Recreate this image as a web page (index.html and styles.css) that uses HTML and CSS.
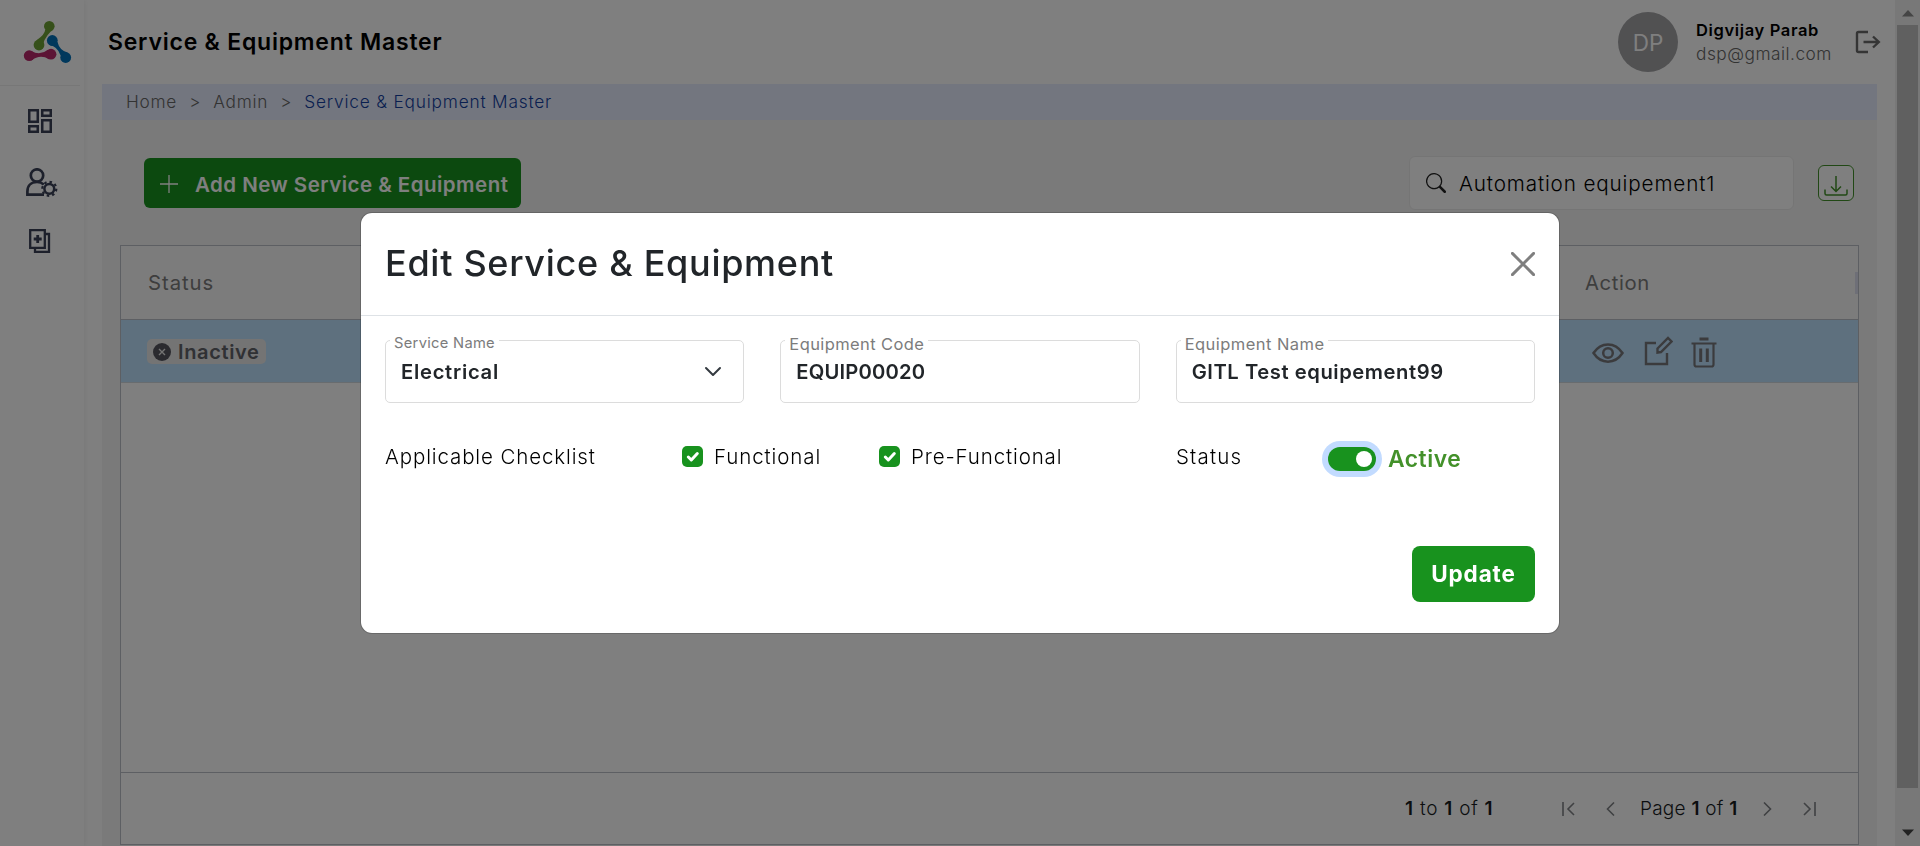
FILE: index.html
```html
<!DOCTYPE html>
<html lang="en">
<head>
<meta charset="utf-8">
<title>Service &amp; Equipment Master</title>
<link rel="stylesheet" href="styles.css">
</head>
<body>
<div class="app">
  <aside class="sidebar">
    <div class="logo">
      <svg width="50" height="46" viewBox="22 19 50 46">
        <g fill="#6da034"><circle cx="49.300" cy="26.200" r="5.300"/><circle cx="39" cy="45" r="5.400"/><path d="M45.200 29.500Q45 34.500 36.500 40.300L42.500 49Q42.500 39.500 51 31.200Z"/></g>
        <g fill="#0070b8"><circle cx="52.300" cy="40.500" r="5.400"/><circle cx="65.700" cy="57.500" r="5.400"/><path d="M49.500 45.100Q57.500 46.500 60.600 55.500L67.500 52.400Q59.500 50.500 57.500 42Z"/></g>
        <g fill="#b8286a"><circle cx="29.200" cy="55.700" r="5.400"/><circle cx="51" cy="54.200" r="5.400"/><path d="M31.500 50.900Q39.500 56.300 48 49.800L49 59.200Q40 53.800 31.500 60.500Z"/></g>
      </svg>
    </div>
    <nav class="side-nav">
      <svg class="nav-dash" width="24" height="24" viewBox="0 0 24 24" fill="none" stroke="#3a4157" stroke-width="2.500"><path d="M1.250 1.250h8.500v11.500h-8.500zM14.250 1.250h8.500v5.500h-8.500zM14.250 11.250h8.500v11.500h-8.500zM1.250 17.250h8.500v5.500h-8.500z"/></svg>
      <svg class="nav-user" width="32" height="30" viewBox="0 0 32 30" fill="none" stroke="#3a4157" stroke-width="2.700"><circle cx="11" cy="7.500" r="6.200"/><path d="M18 26.700H1.400v-3.200C1.400 18 5 14 11 14c3 0 5.200 1 6.800 2.500"/><circle cx="23.300" cy="20.800" r="4.900" stroke-width="2.500"/><circle cx="23.300" cy="20.800" r="7" stroke-width="2.200" stroke-dasharray="2.500 2.998"/></svg>
      <svg class="nav-docs" width="22" height="24" viewBox="0 0 22 24" fill="none" stroke="#3a4157" stroke-width="2.300"><path d="M1.200 1.200h14.600v17.600H1.200zM16 5h4v17.800H6v-4"/><path stroke-width="2.800" d="M8.700 6v8M4.700 10h8"/></svg>
    </nav>
  </aside>
  <div class="page">
    <header class="topbar">
      <h1 class="page-title">Service &amp; Equipment Master</h1>
      <div class="avatar">DP</div>
      <div class="who"><div class="who-name">Digvijay Parab</div><div class="who-mail">dsp@gmail.com</div></div>
      <svg class="logout" width="26" height="24" viewBox="0 0 26 24" fill="none" stroke="#6a6a6a" stroke-width="2.400"><path d="M13 2H3.500Q2 2 2 3.500v17Q2 22 3.500 22H13M8.500 12h15.500M18 6.500 23.800 12l-5.800 5.500"/></svg>
    </header>
    <div class="main">
      <div class="crumbs"><span>Home</span><span class="sep">&gt;</span><span>Admin</span><span class="sep">&gt;</span><span class="here">Service &amp; Equipment Master</span></div>
      <div class="tools">
        <button class="add"><svg width="18" height="18" viewBox="0 0 18 18" stroke="#fff" stroke-width="1.300"><path d="M9 0v18M0 9h18"/></svg><span>Add New Service &amp; Equipment</span></button>
        <div class="search"><svg width="20" height="20" viewBox="0 0 16 16" fill="#222"><path d="M11.742 10.344a6.500 6.500 0 1 0-1.397 1.398h-.001q.044.06.098.115l3.850 3.850a1 1 0 0 0 1.415-1.414l-3.850-3.850a1 1 0 0 0-.115-.1zM12 6.500a5.500 5.500 0 1 1-11 0 5.500 5.500 0 0 1 11 0"/></svg><span>Automation equipement1</span></div>
        <div class="download"><svg width="24" height="20" viewBox="0 0 24 20" fill="none" stroke="#43912a" stroke-width="1.500"><path d="M1 13.500v4Q1 19 2.500 19h19q1.500 0 1.500-1.500v-4M12 0v15M7 10.500l5 5 5-5"/></svg></div>
      </div>
      <div class="grid">
        <div class="grid-head"><span class="th-status">Status</span><span class="th-action">Action</span><i class="resize"></i></div>
        <div class="grid-row">
          <div class="badge"><svg width="18" height="18" viewBox="0 0 18 18"><circle cx="9" cy="9" r="9" fill="#55555f"/><path d="M6 6l6 6M12 6l-6 6" stroke="#e6e6e6" stroke-width="1.400"/></svg><span>Inactive</span></div>
          <div class="actions">
            <svg class="eye" width="32" height="20" viewBox="0 0 32 20" fill="none" stroke="#77777b" stroke-width="2.500"><path d="M1.500 10C9-1.500 23-1.500 30.500 10 23 21.500 9 21.500 1.500 10Z"/><circle cx="16" cy="10" r="4.800"/></svg>
            <svg class="edit" width="29" height="30" viewBox="0 0 29 30" fill="none" stroke="#77777b" stroke-width="2.400"><path d="M12 7H2v21h21V17M13.500 12.500 24 2l3.500 3.500L17 16l-3.500.500z"/></svg>
            <svg class="trash" width="26" height="31" viewBox="0 0 26 31" fill="none" stroke="#77777b" stroke-width="2.200"><path d="M.5 6.500h25M3.500 7v20.500q0 2 2 2h15q2 0 2-2V7"/><path stroke-width="3" d="M8.500 2h9M9.700 11.500V25M16.300 11.500V25"/></svg>
          </div>
        </div>
        <div class="grid-body"></div>
        <div class="grid-foot">
          <span class="range"><b>1</b> to <b>1</b> of <b>1</b></span>
          <svg class="first" width="13" height="14" viewBox="0 0 13 14"><path d="M1 0v14M12 1 6 7l6 6"/></svg>
          <svg class="prev" width="9" height="14" viewBox="0 0 9 14"><path d="M8 .5 1.500 7 8 13.500"/></svg>
          <span class="pages">Page <b>1</b> of <b>1</b></span>
          <svg class="next" width="9" height="14" viewBox="0 0 9 14"><path d="M1 .5 7.500 7 1 13.500"/></svg>
          <svg class="last" width="13" height="14" viewBox="0 0 13 14"><path d="M12 0v14M1 1l6 6-6 6"/></svg>
        </div>
      </div>
    </div>
  </div>
  <div class="scrollbar">
    <svg width="12" height="7" viewBox="0 0 12 7"><path d="M0 6.500 6 0l6 6.500z" fill="#8a8a8a"/></svg>
    <div class="thumb"></div>
    <svg width="12" height="7" viewBox="0 0 12 7"><path d="M0 .5 6 7l6-6.500z" fill="#444"/></svg>
  </div>
</div>

<div class="backdrop">
  <section class="modal" role="dialog">
    <header class="modal-head">
      <h2>Edit Service &amp; Equipment</h2>
      <svg width="24" height="24" viewBox="0 0 24 24" stroke="#7f7f7f" stroke-width="2.900" stroke-linecap="round"><path d="M1.400 1.400l21.200 21.200M22.600 1.400 1.400 22.600"/></svg>
    </header>
    <div class="fields">
      <div class="field"><label class="small">Service Name</label><span class="v-elec">Electrical</span>
        <svg width="18" height="11" viewBox="0 0 18 11" fill="none" stroke="#343a40" stroke-width="2" stroke-linecap="round" stroke-linejoin="round"><path d="M2 2l7 7 7-7"/></svg></div>
      <div class="field"><label class="code">Equipment Code</label><span class="v-code">EQUIP00020</span></div>
      <div class="field"><label class="name">Equipment Name</label><span class="v-name">GITL Test equipement99</span></div>
    </div>
    <div class="options">
      <span class="o-title">Applicable Checklist</span>
      <span class="check"><svg viewBox="0 0 21 21" width="21" height="21" fill="none" stroke="#fff" stroke-width="3" stroke-linecap="round" stroke-linejoin="round"><path d="M6.300 11l3 3 6-6.500"/></svg></span>
      <span class="o-func">Functional</span>
      <span class="check"><svg viewBox="0 0 21 21" width="21" height="21" fill="none" stroke="#fff" stroke-width="3" stroke-linecap="round" stroke-linejoin="round"><path d="M6.300 11l3 3 6-6.500"/></svg></span>
      <span class="o-pre">Pre-Functional</span>
      <span class="o-status">Status</span>
      <span class="toggle"><i></i></span>
      <span class="o-active">Active</span>
    </div>
    <footer class="modal-foot"><button class="update">Update</button></footer>
  </section>
</div>
</body>
</html>
```
FILE: styles.css
```css
*{box-sizing:border-box}
html,body{margin:0;height:846px;overflow:hidden}
body{font-family:Inter,"Noto Sans",sans-serif;background:#fff;color:#212529}
svg{display:block;flex:none}
span,label{white-space:nowrap}
button{font-family:inherit;border:0;color:#fff;background:#18921e}
h1,h2{margin:0}

.app{display:flex;height:846px}
.sidebar{width:84px;flex:none;background:#fff;box-shadow:0 0 6px rgba(0,0,0,.08)}
.logo{width:80px;height:86px;padding:19px 0 0 22px;border-bottom:1px solid #eee}
.side-nav{display:flex;flex-direction:column;align-items:flex-start}
.nav-dash{margin:23px 0 0 28px}
.nav-user{margin:35px 0 0 26px}
.nav-docs{margin:31px 0 0 29px}

.page{flex:1;min-width:0;padding:0 18px}
.topbar{height:84px;display:flex;align-items:center;padding-left:6px}
.page-title{flex:1;font-size:23px;font-weight:600;letter-spacing:.780px;color:#000;white-space:nowrap}
.avatar{width:60px;height:60px;border-radius:50%;background:#a2a2a5;color:#fff;display:flex;align-items:center;justify-content:center;font-size:22.500px}
.who{width:159px;margin-left:18px;line-height:24px;font-size:16.500px;white-space:nowrap}
.who-name{font-weight:600;letter-spacing:.640px;color:#000}
.who-mail{font-size:17.300px;letter-spacing:.500px;font-weight:300;color:#666}
.logout{margin-right:-4px}

.main{height:762px;background:#f5f5f5}
.crumbs{height:36px;background:#e6edff;display:flex;align-items:center;padding:0 0 2px 24px;font-size:17.300px;font-weight:300;letter-spacing:.750px;color:#666}
.crumbs .sep{margin:0 12px}
.crumbs .here{color:#143fa0;letter-spacing:.800px}
.tools{height:125px;display:flex;align-items:flex-start;padding:36px 22px 0 42px}
.add{width:377px;height:50px;margin-top:2px;border-radius:6px;display:flex;align-items:center;gap:17px;padding:2px 0 0 16px;font-size:20.500px;font-weight:600;letter-spacing:.470px}
.search{width:385px;height:54px;margin-left:auto;border:1px solid #ebebeb;border-radius:6px;background:#fff;display:flex;align-items:center;gap:13px;padding-left:16px;font-size:20.700px;font-weight:300;letter-spacing:.850px;color:#000}
.download{width:36px;height:36px;margin:9px 1px 0 24px;border:1.500px solid #43912a;border-radius:6px;background:#fff;display:flex;justify-content:center;padding-top:10px}

.grid{width:1739px;height:600px;margin-left:18px;border:1px solid #babfc7;background:#fff;display:flex;flex-direction:column}
.grid-head{height:74px;border-bottom:1px solid #babfc7;background:#f8f8f8;display:flex;align-items:center;padding-left:27px;font-size:20.300px;color:#7c7c7c}
.th-status{width:1437px;letter-spacing:.950px}
.th-action{letter-spacing:.600px}
.resize{width:3px;height:22px;margin-left:auto;background:#dcdfee}
.grid-row{height:63px;background:#bce0fc;border-bottom:1px solid #d0d8df;display:flex;align-items:flex-start}
.badge{width:119px;height:25px;margin:19px 0 0 26px;border-radius:5px;background:#e8e8e8;display:flex;align-items:center;gap:7px;padding-left:6px;font-size:20px;font-weight:600;letter-spacing:.650px;color:#606268}
.actions{display:flex;align-items:flex-start;margin-left:1326px}
.eye{margin-top:23px}
.edit{margin:16px 0 0 20px}
.trash{margin:17px 0 0 18px}
.grid-body{flex:1}
.grid-foot{height:72px;border-top:1px solid #babfc7;display:flex;align-items:center;padding-left:1284px;font-size:19px;font-weight:300;color:#181d1f}
.grid-foot b{font-weight:600}
.grid-foot svg{fill:none;stroke:#808386;stroke-width:1.600}
.range{width:157px;letter-spacing:.750px}
.prev{margin-left:31px}
.pages{width:98px;margin:0 25px 0 25px;letter-spacing:.250px}
.last{margin-left:31px}

.scrollbar{width:25px;flex:none;background:#f1f1f1;display:flex;flex-direction:column;align-items:center;padding:10px 0}
.thumb{width:21px;height:764px;margin:8px 0 41px;background:#c1c1c1}

.backdrop{position:fixed;inset:0;background:rgba(0,0,0,.5);display:flex;align-items:center;justify-content:center}
.modal{width:1200px;height:422px;border:1px solid rgba(0,0,0,.175);background-clip:padding-box;background-color:#fff;border-radius:12px}
.modal-head{height:103px;border-bottom:1px solid #dee2e6;display:flex;align-items:center;justify-content:space-between;padding:0 24px}
.modal-head h2{font-size:36px;font-weight:500;letter-spacing:.700px;padding-bottom:2px}
.fields{display:grid;grid-template-columns:repeat(3,1fr);gap:36px;padding:24px 24px 0}
.field{height:63px;border:1px solid #dcdcdc;border-radius:5px;position:relative;display:flex;align-items:center;justify-content:space-between;padding:0 21px 0 15px;font-size:20.200px;font-weight:600}
.field label{position:absolute;left:4px;top:-7px;padding:0 4px;background:#fff;font-weight:400;color:#7c7c7c;font-size:16.500px;line-height:21px}
.field .small{font-size:14.700px;letter-spacing:.300px;top:-8px}
.field .code{letter-spacing:.400px}
.field .name{letter-spacing:.450px}
.v-elec{letter-spacing:.730px}
.v-code{letter-spacing:.170px}
.v-name{letter-spacing:.560px}
.options{height:107px;display:flex;align-items:center;padding:0 24px;font-size:20.500px;font-weight:300;color:#000}
.o-title{width:297px;letter-spacing:.880px}
.check{width:21px;height:21px;border-radius:5px;background:#18921e}
.o-func{width:165px;margin-left:11px;letter-spacing:.900px}
.o-pre{width:265px;margin-left:11px;letter-spacing:.870px}
.o-status{width:152px;letter-spacing:1.150px}
.toggle{width:48px;height:24px;margin:5px 0 0;border-radius:12px;background:#18921e;box-shadow:0 0 0 6px #c2dbff;display:flex;align-items:center;justify-content:flex-end;padding-right:4px}
.toggle i{width:16px;height:16px;border-radius:50%;background:#fff}
.o-active{margin:4px 0 0 12px;font-size:22.800px;font-weight:600;letter-spacing:.550px;color:#43912a}
.modal-foot{display:flex;justify-content:flex-end;padding:36px 24px 0}
.update{width:123px;height:56px;border-radius:8px;font-size:22.500px;font-weight:700;letter-spacing:.900px;padding:0 0 1px}
```
